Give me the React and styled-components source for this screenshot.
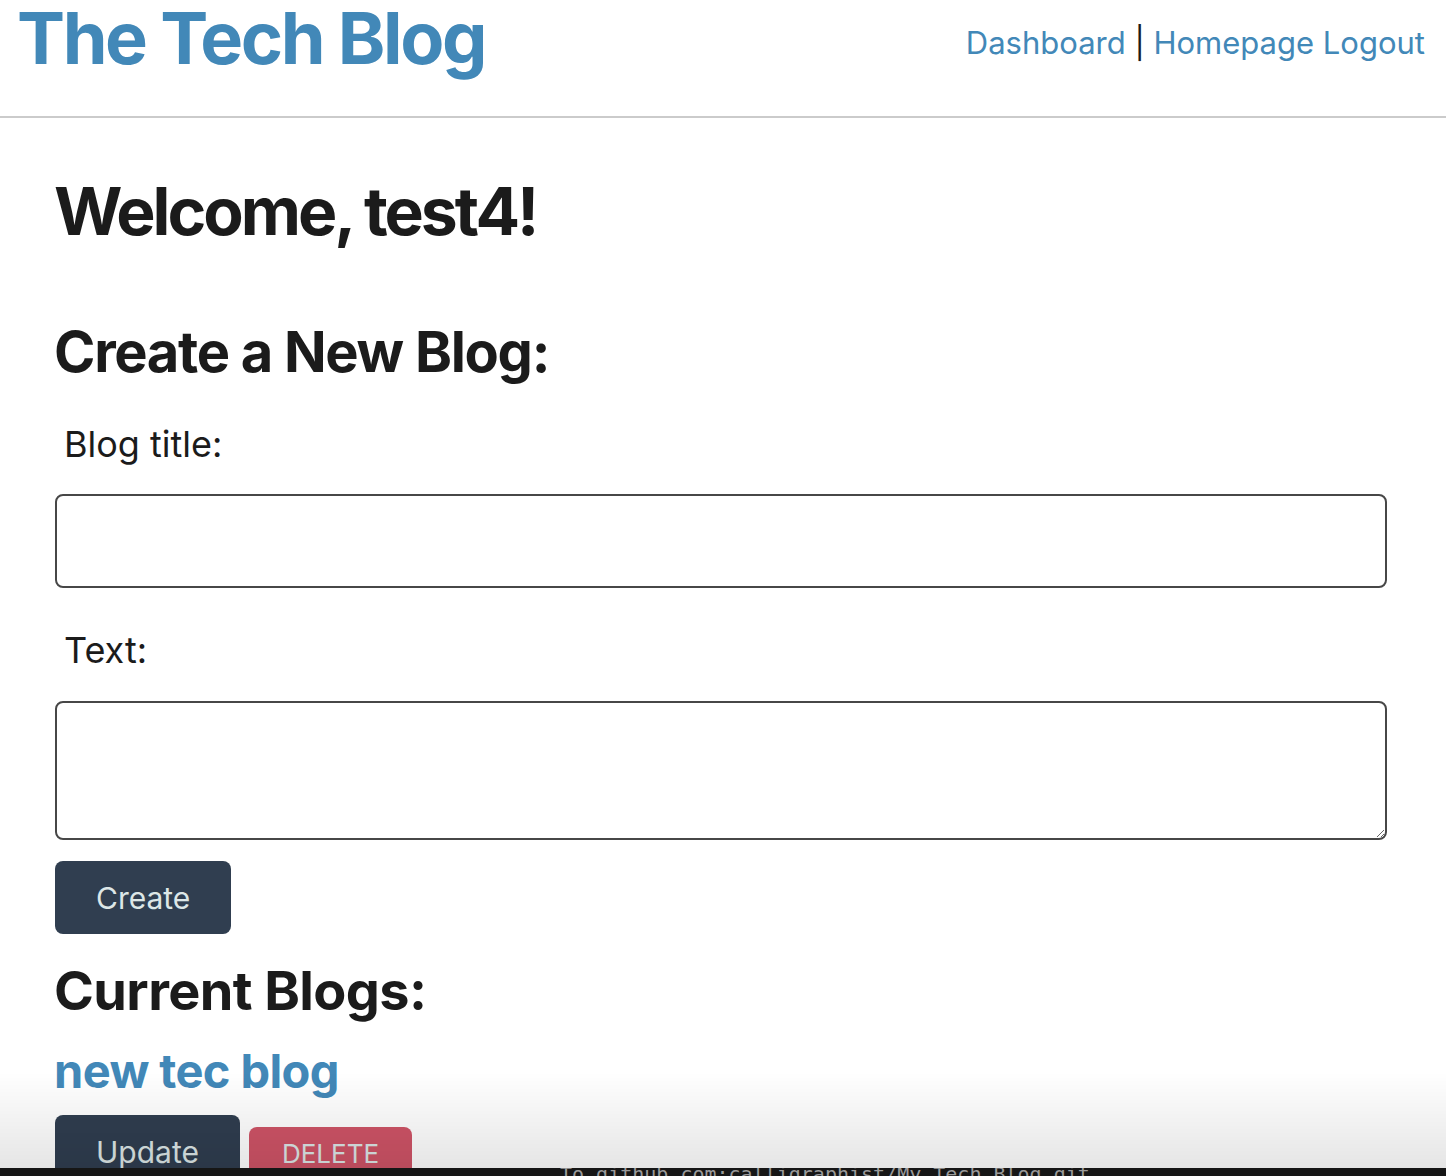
import React from "react"
import styled, { createGlobalStyle } from "styled-components"

const GlobalStyle = createGlobalStyle`
  * {
    box-sizing: border-box;
  }

  body {
    margin: 0;
    background-color: #ffffff;
    font-family: Inter, "Noto Sans", sans-serif;
    color: #1b1b1b;
  }
`

const Header = styled.header`
  display: flex;
  justify-content: space-between;
  align-items: flex-start;
  height: 118px;
  padding: 2px 21px 0 17px;
  border-bottom: 2px solid #cbcbcb;
`

const SiteTitle = styled.h1`
  margin: 0;
  font-size: 72px;
  line-height: 1;
  font-weight: 700;
  letter-spacing: -2.4px;
  color: #4288b8;
`

const Nav = styled.nav`
  margin-top: 25px;
  font-size: 31px;
  line-height: 1;
  color: #1b1b1b;
`

const NavLink = styled.a`
  color: #4288b8;
  text-decoration: none;
  cursor: pointer;
`

const Main = styled.main`
  display: flex;
  flex-direction: column;
  align-items: flex-start;
  padding: 60px 59px 40px 54px;
`

const Heading = styled.h2`
  margin: ${(p) => p.$margin || "0"};
  font-size: ${(p) => p.$size}px;
  line-height: 1;
  font-weight: 700;
  letter-spacing: ${(p) => p.$track}px;
  color: #1b1b1b;
`

const Form = styled.form`
  display: flex;
  flex-direction: column;
  align-items: flex-start;
  width: 100%;
  padding-left: 1px;
`

const Label = styled.label`
  margin: ${(p) => p.$margin};
  padding-left: 9px;
  font-size: 36px;
  line-height: 1;
  color: #1b1b1b;
`

const TextInput = styled.input`
  width: 100%;
  height: 94px;
  border: 2px solid #474747;
  border-radius: 8px;
  padding: 0 14px;
  font-family: inherit;
  font-size: 30px;
  background: #ffffff;
`

const TextArea = styled.textarea`
  display: block;
  width: 100%;
  height: 139px;
  border: 2px solid #474747;
  border-radius: 8px;
  padding: 10px 14px;
  font-family: inherit;
  font-size: 30px;
  background: #ffffff;
`

const Button = styled.button`
  border: none;
  border-radius: 8px;
  padding: ${(p) => (p.$danger ? "14px 33px 13px" : "22px 41px 21px")};
  font-family: inherit;
  font-size: ${(p) => (p.$danger ? 26 : 30)}px;
  line-height: 1;
  text-transform: ${(p) => (p.$danger ? "uppercase" : "none")};
  color: #dde7e7;
  background-color: ${(p) => (p.$danger ? "#cf5467" : "#303e50")};
  cursor: pointer;
`

const BlogLink = styled.a`
  margin-top: 29px;
  font-size: 47px;
  line-height: 1;
  font-weight: 700;
  letter-spacing: -0.6px;
  color: #4288b8;
  text-decoration: none;
  cursor: pointer;
`

const BlogActions = styled.div`
  display: flex;
  align-items: baseline;
  gap: 9px;
  margin-top: 21px;
  padding-left: 1px;
`

const ScreenFade = styled.div`
  position: fixed;
  left: 0;
  right: 0;
  bottom: 8px;
  height: 96px;
  background: linear-gradient(to bottom, rgba(0, 0, 0, 0), rgba(0, 0, 0, 0.1));
  pointer-events: none;
`

const Terminal = styled.div`
  position: fixed;
  left: 0;
  right: 0;
  bottom: 0;
  height: 8px;
  overflow: hidden;
  background-color: #161616;
  pointer-events: none;
`

const TerminalText = styled.div`
  margin: -4px 0 0 560px;
  font-family: "DejaVu Sans Mono", monospace;
  font-size: 20px;
  line-height: 20px;
  color: #9a9a9a;
  white-space: nowrap;
`

export default function App() {
  return (
    <>
      <GlobalStyle />
      <Header>
        <SiteTitle>The Tech Blog</SiteTitle>
        <Nav>
          <NavLink>Dashboard</NavLink> | <NavLink>Homepage</NavLink>{" "}
          <NavLink>Logout</NavLink>
        </Nav>
      </Header>

      <Main>
        <Heading $size={66} $track={-3}>
          Welcome, test4!
        </Heading>
        <Heading $size={56} $track={-1.3} $margin="80px 0 0">
          Create a New Blog:
        </Heading>

        <Form onSubmit={(e) => e.preventDefault()}>
          <Label htmlFor="blog-title" $margin="46px 0 32px">
            Blog title:
          </Label>
          <TextInput id="blog-title" type="text" />
          <Label htmlFor="blog-text" $margin="44px 0 33px">
            Text:
          </Label>
          <TextArea id="blog-text" />
          <Button type="submit" style={{ marginTop: 21 }}>
            Create
          </Button>
        </Form>

        <Heading $size={54} $track={-0.6} $margin="30px 0 0">
          Current Blogs:
        </Heading>
        <BlogLink>new tec blog</BlogLink>
        <BlogActions>
          <Button>Update</Button>
          <Button $danger>Delete</Button>
        </BlogActions>
      </Main>

      <ScreenFade />
      <Terminal>
        <TerminalText>To github.com:calligraphist/My_Tech_Blog.git</TerminalText>
      </Terminal>
    </>
  )
}
